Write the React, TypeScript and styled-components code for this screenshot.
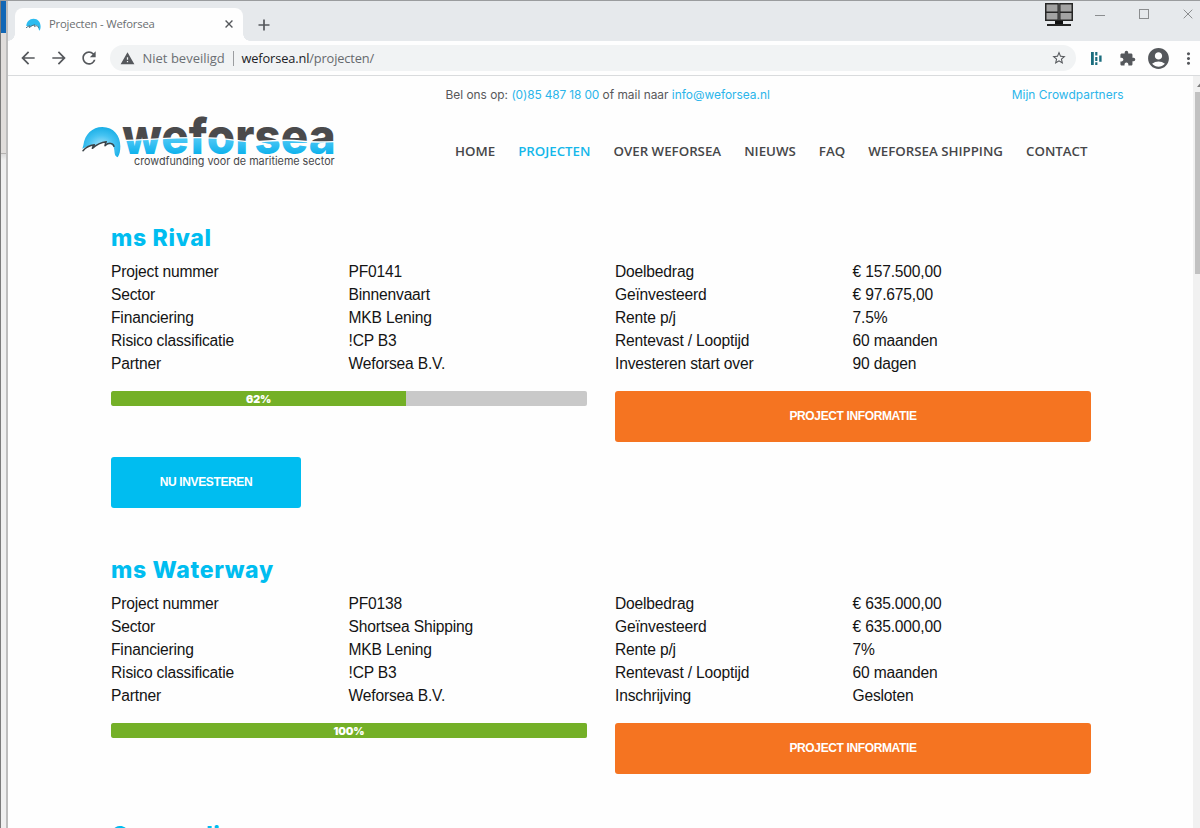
import React from 'react';
import styled, { createGlobalStyle } from 'styled-components';
import {
  MdAccountCircle, MdArrowBack, MdArrowForward, MdExtension,
  MdMoreVert, MdRefresh, MdStarBorder, MdWarning,
} from 'react-icons/md';

const Global = createGlobalStyle`
  * { box-sizing: border-box; }
  body { margin: 0; overflow: hidden; background: #fefefe; }
`;

const ui = '"Open Sans", "Noto Sans", sans-serif';
const brand = 'Inter, sans-serif';
const blue = '#00bdf0';

/* ---------- desktop and window frame ---------- */

const Desktop = styled.div`
  display: flex;
  width: 1200px;
  height: 828px;
  overflow: hidden;
  border-top: 1px solid #9a9c9e;
`;

const Behind = styled.div`
  display: flex;
  flex-direction: column;
  flex: none;
  width: 8px;
  border-left: 1px solid #7b7b7b;
  border-right: 2px solid #bdbdbd;
`;

const BehindTitle = styled.div`
  height: 32px;
  background: #1167b6;
`;

const BehindPanel = styled.div`
  height: 121px;
  background: #e0dddb;
  border-bottom: 1px solid #b5b3b1;
`;

const BehindRest = styled.div`
  flex: 1;
  background: linear-gradient(#dcdcdc, #efefef 6px);
`;

const Window = styled.div`
  display: flex;
  flex-direction: column;
  flex: none;
  width: 1192px;
`;

/* ---------- title bar ---------- */

const TitleBar = styled.div`
  display: flex;
  height: 40px;
  background: #e6e9ec;
`;

const TabShape = styled.div`
  position: relative;
  display: flex;
  align-items: center;
  width: 228px;
  height: 33px;
  margin: 7px 0 0 7px;
  padding: 0 10.5px 1px 11px;
  background: #fefefe;
  border-radius: 8px 8px 0 0;

  &::before,
  &::after {
    content: '';
    position: absolute;
    bottom: 0;
    width: 7px;
    height: 7px;
  }
  &::before {
    left: -7px;
    background: radial-gradient(circle at 0 0, transparent 6.5px, #fefefe 7px);
  }
  &::after {
    right: -7px;
    background: radial-gradient(circle at 100% 0, transparent 6.5px, #fefefe 7px);
  }
`;

const TabTitle = styled.span`
  flex: 1;
  margin-left: 8px;
  font: 400 11.3px/16px ${ui};
  letter-spacing: -0.2px;
  color: #6b6e71;
  white-space: nowrap;
`;

const NewTab = styled.div`
  display: flex;
  align-items: center;
  margin: 7px 0 0 15px;
`;

const WindowControls = styled.div`
  display: flex;
  align-items: flex-start;
  margin-left: auto;
  padding-right: 7px;
`;

const MonitorSlot = styled.div`
  height: 28px;
  padding-top: 1px;
  margin-right: 22px;
`;

const Control = styled.div<{ $gap?: number }>`
  display: flex;
  padding-top: 8px;
  margin-right: ${(p) => p.$gap ?? 0}px;
`;

/* ---------- toolbar ---------- */

const Toolbar = styled.div`
  display: flex;
  align-items: center;
  height: 35px;
  padding-left: 10px;
  background: #fefefe;
  border-bottom: 1px solid #d9dbdd;
  color: #55585c;
`;

const NavButtons = styled.div`
  display: flex;
  gap: 10.5px;
  svg { display: block; }
`;

const AddressBar = styled.div`
  display: flex;
  align-items: center;
  flex: none;
  width: 966px;
  height: 26px;
  margin-left: 11px;
  padding: 0 9px 0 10px;
  border-radius: 13px;
  background: #f1f3f4;
  font: 400 13px/18px ${ui};
  white-space: nowrap;
`;

const Insecure = styled.span`
  width: 82px;
  margin-left: 7.5px;
  color: #6b6f73;
`;

const Separator = styled.span`
  width: 1px;
  height: 15px;
  margin: 0 8px;
  background: #9b9da0;
`;

const Url = styled.span`
  flex: 1;
  font-size: 12.8px;
  letter-spacing: -0.13px;
  color: #66696d;
  b { font-weight: 400; color: #202124; }
`;

const Extensions = styled.div`
  display: grid;
  flex: none;
  grid-template-columns: repeat(4, 30.5px);
  place-items: center;
  margin-left: 6px;
`;

/* ---------- page ---------- */

const Viewport = styled.div`
  display: flex;
  flex: 1;
  min-height: 0;
  overflow: hidden;
`;

const Page = styled.div`
  width: 1185px;
  flex: none;
  background: #fefefe;
`;

const TopLine = styled.div`
  display: flex;
  justify-content: space-between;
  height: 38px;
  padding: 0 69.5px 0 437.5px;
  font: 400 11.9px/38px ${brand};
  color: #58585a;
  white-space: nowrap;
`;

const TextLink = styled.a<{ $tracking?: number }>`
  color: #2bb5ea;
  letter-spacing: ${(p) => p.$tracking ?? 0}px;
`;

const Header = styled.header`
  display: flex;
  height: 61px;
  padding-left: 62px;
`;

const Menu = styled.nav`
  display: flex;
  gap: 23px;
  margin-left: 105px;
  padding-top: 27px;
  font: 600 13.3px/20px ${ui};
  white-space: nowrap;
`;

const MenuItem = styled.a<{ $active?: boolean }>`
  color: ${(p) => (p.$active ? '#15b7ea' : '#464749')};
`;

const Projects = styled.main`
  display: flex;
  flex-direction: column;
  gap: 47.5px;
  padding: 49px 102px 0 103px;
`;

const Title = styled.h2`
  margin: 0 0 9.3px;
  font: 800 23px/28px ${brand};
  letter-spacing: 0.68px;
  color: ${blue};
`;

const Columns = styled.div`
  display: grid;
  grid-template-columns: 476px 476px;
  column-gap: 28px;
`;

const Facts = styled.dl`
  display: grid;
  grid-template-columns: 237.5px 1fr;
  grid-auto-rows: 22.87px;
  margin: 0 0 15.2px;
  font: 400 15.6px/22.87px "Liberation Sans", Arial, sans-serif;
  letter-spacing: -0.175px;
  color: #141414;
  dt, dd { margin: 0; white-space: nowrap; }
`;

const Track = styled.div`
  height: 15px;
  border-radius: 2px;
  overflow: hidden;
  background: #c9c9c9;
`;

const Fill = styled.div`
  height: 15px;
  border-radius: 2px 0 0 2px;
  background: #74b027;
  color: #fff;
  font: 900 10.8px/17px ${brand};
  letter-spacing: -0.15px;
  text-align: center;
`;

const Button = styled.button<{ $tone: 'orange' | 'blue' }>`
  display: block;
  width: ${(p) => (p.$tone === 'blue' ? '190px' : '100%')};
  height: 51px;
  margin-top: ${(p) => (p.$tone === 'blue' ? '15.5px' : 0)};
  padding: 0;
  border: 0;
  border-radius: 3px;
  background: ${(p) => (p.$tone === 'blue' ? blue : '#f57421')};
  color: #fff;
  font: 700 12px/51px "Liberation Sans", Arial, sans-serif;
  letter-spacing: -0.37px;
`;

const Scrollbar = styled.div`
  flex: 1;
  padding-left: 2px;
  background: #f1f1f1;
  overflow: hidden;
`;

const ScrollUp = styled.div`
  height: 16px;
  padding: 7px 0 0 2px;
  svg { display: block; }
`;

const Thumb = styled.div`
  height: 182px;
  background: #c1c1c1;
`;

/* ---------- drawings ---------- */

const Favicon = () => (
  <svg width="15" height="13" viewBox="38 60 116 100">
    <path d="M40 122C43 88 66 66 96 66c34 0 54 26 55 58 0 14-2 24-8 34-10-6-6-24-16-38l-22-6-28 12-14-2z" fill="#2cbcf0" />
    <path d="M38 136q16-14 30-16l-4 14q20-20 42-22l-2 14c16-10 26-8 32 12" fill="none" stroke="#4b6a78" strokeWidth="7" />
  </svg>
);

const Plus = () => (
  <svg width="12" height="12" viewBox="0 0 12 12">
    <path d="M6 .5v11M.5 6h11" stroke="#55585c" strokeWidth="1.7" />
  </svg>
);

const Cross = ({ size, color, width }: { size: number; color: string; width: number }) => (
  <svg width={size} height={size} viewBox="0 0 10 10">
    <path d="M.7.7l8.6 8.6M9.3.7L.7 9.3" stroke={color} strokeWidth={width} />
  </svg>
);

const Monitor = () => (
  <svg width="28" height="25" viewBox="0 0 28 25">
    <rect x="0" y="1" width="28" height="18" fill="#262626" />
    <path d="M1.5 2.5h11v7h-11zM15.5 2.5h11v7h-11zM1.5 11h11v6.500h-11zM15.5 11h11v6.500h-11z" fill="#a3a3a3" />
    <path d="M14 1v17" stroke="#606060" strokeWidth="1" />
    <path d="M10 19h8v3h-8z" fill="#111" />
    <path d="M2 22h24v2H2z" fill="#242424" />
  </svg>
);

const BarsExtension = () => (
  <svg width="12" height="15" viewBox="0 0 12 15">
    <path d="M0 1h2.800v13H0zM4.200 1h2.200v3.500H4.200zM4.200 6h2.200v4H4.200zM4.200 11.200h2.200V14H4.200zM8.200 4.500h2.400v6.300H8.200z" fill="#1b6d7e" />
  </svg>
);

const Logo = () => (
  <svg width="280" height="61" viewBox="0 27 840 183">
    <defs>
      <linearGradient id="water" gradientUnits="userSpaceOnUse" x1="0" y1="98" x2="0" y2="148">
        <stop offset="0" stopColor="#52c9f6" />
        <stop offset="1" stopColor="#0db1ec" />
      </linearGradient>
      <radialGradient id="globe" cx=".5" cy=".6" r=".6">
        <stop offset="0" stopColor="#a5e2fa" />
        <stop offset=".55" stopColor="#45c3f2" />
        <stop offset="1" stopColor="#18aee6" />
      </radialGradient>
      <pattern id="waterline" patternUnits="userSpaceOnUse" x="0" y="0" width="840" height="210">
        <rect width="840" height="210" fill="#4a4a4c" />
        <path d="M150 106C230 106 300 96 400 98S500 112 560 110s80-8 130-2 110 2 150-2v104H150z" fill="url(#water)" />
        <path d="M150 106C230 106 300 96 400 98S500 112 560 110s80-8 130-2 110 2 150-2" fill="none" stroke="#fefefe" strokeWidth="4" />
      </pattern>
    </defs>
    <path d="M40 121C44 88 67 66 97 66c34 0 54 26 54 58 0 14-2 24-8 33-12-4-8-18-12-30-4-10-14-12-27-5l3-10c-14 1-28 8-42 17l4-10c-12 2-24 8-32 12z" fill="url(#globe)" />
    <path d="M39 137c8-10 20-16 34-18-3 3-5 7-6 11 12-11 26-18 42-20-3 4-4 8-4 12 10-9 24-10 27 2" fill="none" stroke="#3b4348" strokeWidth="4.500" strokeLinejoin="round" strokeLinecap="round" />
    <text x="157" y="147" fontFamily="Inter, sans-serif" fontWeight="800" fontSize="148" textLength="640" lengthAdjust="spacingAndGlyphs" fill="url(#waterline)">weforsea</text>
    <text x="192" y="179" fontFamily="Inter, sans-serif" fontSize="33" textLength="602" lengthAdjust="spacingAndGlyphs" fill="#48484a">crowdfunding voor de maritieme sector</text>
  </svg>
);

/* ---------- content ---------- */

type Fact = [string, string];
interface Project {
  name: string;
  details?: Fact[];
  funding?: Fact[];
  percent?: number;
  open?: boolean;
}

const projects: Project[] = [
  {
    name: 'ms Rival',
    details: [
      ['Project nummer', 'PF0141'],
      ['Sector', 'Binnenvaart'],
      ['Financiering', 'MKB Lening'],
      ['Risico classificatie', '!CP B3'],
      ['Partner', 'Weforsea B.V.'],
    ],
    funding: [
      ['Doelbedrag', '€ 157.500,00'],
      ['Geïnvesteerd', '€ 97.675,00'],
      ['Rente p/j', '7.5%'],
      ['Rentevast / Looptijd', '60 maanden'],
      ['Investeren start over', '90 dagen'],
    ],
    percent: 62,
    open: true,
  },
  {
    name: 'ms Waterway',
    details: [
      ['Project nummer', 'PF0138'],
      ['Sector', 'Shortsea Shipping'],
      ['Financiering', 'MKB Lening'],
      ['Risico classificatie', '!CP B3'],
      ['Partner', 'Weforsea B.V.'],
    ],
    funding: [
      ['Doelbedrag', '€ 635.000,00'],
      ['Geïnvesteerd', '€ 635.000,00'],
      ['Rente p/j', '7%'],
      ['Rentevast / Looptijd', '60 maanden'],
      ['Inschrijving', 'Gesloten'],
    ],
    percent: 100,
  },
  { name: 'Concordia' },
];

const menu = ['HOME', 'PROJECTEN', 'OVER WEFORSEA', 'NIEUWS', 'FAQ', 'WEFORSEA SHIPPING', 'CONTACT'];

const FactList = ({ facts }: { facts: Fact[] }) => (
  <Facts>
    {facts.map(([label, value]) => (
      <React.Fragment key={label}>
        <dt>{label}</dt>
        <dd>{value}</dd>
      </React.Fragment>
    ))}
  </Facts>
);

const ProjectCard = ({ name, details, funding, percent, open }: Project) => (
  <section>
    <Title>{name}</Title>
    {details && funding && (
      <Columns>
        <FactList facts={details} />
        <FactList facts={funding} />
        <Track>
          <Fill style={{ width: `${percent}%` }}>{percent}%</Fill>
        </Track>
        <Button $tone="orange">PROJECT INFORMATIE</Button>
      </Columns>
    )}
    {open && <Button $tone="blue">NU INVESTEREN</Button>}
  </section>
);

export default function App() {
  return (
    <Desktop>
      <Global />
      <Behind>
        <BehindTitle />
        <BehindPanel />
        <BehindRest />
      </Behind>
      <Window>
        <TitleBar>
          <TabShape>
            <Favicon />
            <TabTitle>Projecten - Weforsea</TabTitle>
            <Cross size={8} color="#55585c" width={1.7} />
          </TabShape>
          <NewTab><Plus /></NewTab>
          <WindowControls>
            <MonitorSlot><Monitor /></MonitorSlot>
            <Control $gap={34}>
              <svg width="10" height="11"><path d="M0 6.500h10" stroke="#8b8d8f" /></svg>
            </Control>
            <Control $gap={34}>
              <svg width="10" height="11"><rect x=".5" y=".5" width="9" height="9" fill="none" stroke="#8b8d8f" /></svg>
            </Control>
            <Control><Cross size={10} color="#8b8d8f" width={1} /></Control>
          </WindowControls>
        </TitleBar>
        <Toolbar>
          <NavButtons>
            <MdArrowBack size={20} />
            <MdArrowForward size={20} />
            <MdRefresh size={20} />
          </NavButtons>
          <AddressBar>
            <MdWarning size={15} />
            <Insecure>Niet beveiligd</Insecure>
            <Separator />
            <Url><b>weforsea.nl</b>/projecten/</Url>
            <MdStarBorder size={16} />
          </AddressBar>
          <Extensions>
            <BarsExtension />
            <MdExtension size={17} />
            <MdAccountCircle size={25} />
            <MdMoreVert size={19} />
          </Extensions>
        </Toolbar>
        <Viewport>
          <Page>
            <TopLine>
              <span>
                Bel ons op: <TextLink $tracking={-0.13}>(0)85 487 18 00</TextLink> of mail naar{' '}
                <TextLink>info@weforsea.nl</TextLink>
              </span>
              <TextLink $tracking={0.05}>Mijn Crowdpartners</TextLink>
            </TopLine>
            <Header>
              <Logo />
              <Menu>
                {menu.map((item) => (
                  <MenuItem key={item} $active={item === 'PROJECTEN'}>{item}</MenuItem>
                ))}
              </Menu>
            </Header>
            <Projects>
              {projects.map((project) => (
                <ProjectCard key={project.name} {...project} />
              ))}
            </Projects>
          </Page>
          <Scrollbar>
            <ScrollUp>
              <svg width="7" height="4" viewBox="0 0 7 4"><path d="M0 4l3.500-4L7 4z" fill="#7d7d7d" /></svg>
            </ScrollUp>
            <Thumb />
          </Scrollbar>
        </Viewport>
      </Window>
    </Desktop>
  );
}
